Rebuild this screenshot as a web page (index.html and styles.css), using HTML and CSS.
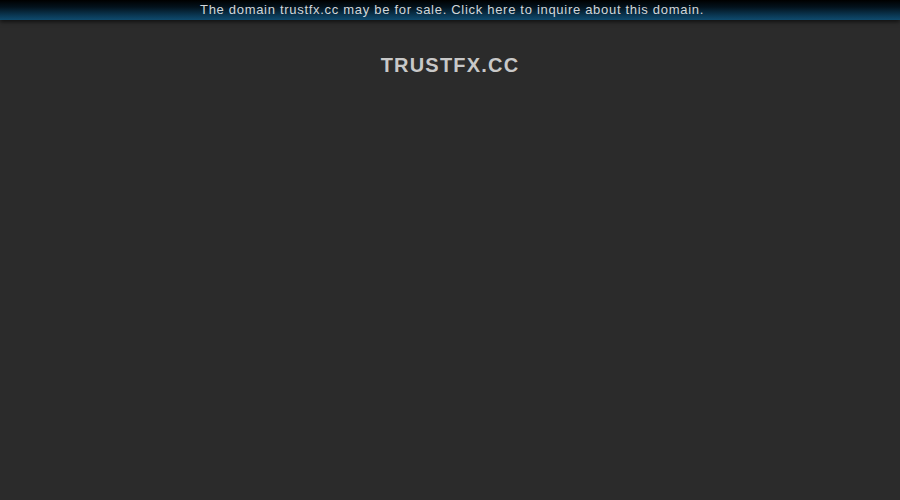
FILE: index.html
```html
<!DOCTYPE html>
<html>
<head>
<meta charset="utf-8">
<link rel="stylesheet" href="styles.css">
</head>
<body>
<div class="bar">The domain trustfx.cc may be for sale. Click here to inquire about this domain.</div>
<h1 class="title">TRUSTFX.CC</h1>
</body>
</html>
```
FILE: styles.css
```css
html, body {
  margin: 0;
  padding: 0;
  background: #2b2b2b;
  height: 100%;
  font-family: "Liberation Sans", Arial, sans-serif;
}
.bar {
  height: 20px;
  line-height: 20px;
  padding-left: 4px;
  text-align: center;
  font-size: 13px;
  letter-spacing: 0.7px;
  color: #d2d6d9;
  background: linear-gradient(to bottom, #000000 0%, #03121c 35%, #0b3a57 80%, #0f4b6e 100%);
  box-shadow: 0 2px 4px rgba(0,0,0,0.6);
}
.title {
  margin: 0;
  padding-top: 32px;
  text-align: center;
  font-size: 20px;
  font-weight: bold;
  letter-spacing: 1.2px;
  color: #c8c8c8;
  line-height: 26px;
}
```
